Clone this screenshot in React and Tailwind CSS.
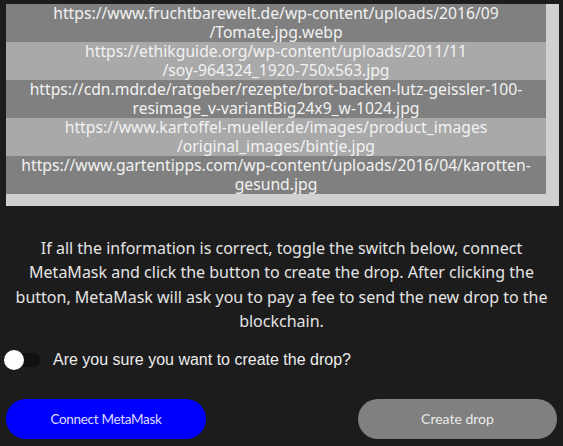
import React, { useState } from 'react';

// each url is split where the reference wraps it
const urls = [
    ['https://www.fruchtbarewelt.de/wp-content/uploads/2016/09', '/Tomate.jpg.webp'],
    ['https://ethikguide.org/wp-content/uploads/2011/11', '/soy-964324_1920-750x563.jpg'],
    ['https://cdn.mdr.de/ratgeber/rezepte/brot-backen-lutz-geissler-100-', 'resimage_v-variantBig24x9_w-1024.jpg'],
    ['https://www.kartoffel-mueller.de/images/product_images', '/original_images/bintje.jpg'],
    ['https://www.gartentipps.com/wp-content/uploads/2016/04/karotten-', 'gesund.jpg'],
];

const App = () => {
    const [confirmed, setConfirmed] = useState(false);

    return (
        <div className="min-h-[446px] bg-[#1c1c1c] pt-[4px] font-['Noto_Sans',sans-serif]">
            {/* image url list */}
            <div className="mx-[6px] w-[553px] bg-[#d0d0d0] pr-[13px] pb-[12px]">
                {urls.map(([first, second], i) => (
                    <div
                        key={first}
                        className={`h-[38px] text-center text-[15.7px] leading-[19px] text-[#f2f2f2] whitespace-nowrap ${i % 2 === 0 ? 'bg-[#808080]' : 'bg-[#a9a9a9]'}`}
                    >
                        <div>{first}</div>
                        <div>{second}</div>
                    </div>
                ))}
            </div>

            <p className="mt-[30px] px-[8px] text-center text-[16px] leading-[24.4px] text-[#e4e4e4]">
                If all the information is correct, toggle the switch below, connect MetaMask and click the button to create the drop. After clicking the button, MetaMask will ask you to pay a fee to send the new drop to the blockchain.
            </p>

            <div className="mt-[14px] flex items-center gap-[13px] pl-[4px]">
                <button
                    type="button"
                    onClick={() => setConfirmed(!confirmed)}
                    className="relative h-[14px] w-[36px] rounded-full bg-[#111111]"
                >
                    <span className={`absolute top-[-3px] h-[20px] w-[20px] rounded-full bg-white ${confirmed ? 'left-[16px]' : 'left-0'}`} />
                </button>
                <span className="font-['Liberation_Sans',sans-serif] text-[16px] text-[#ececec]">
                    Are you sure you want to create the drop?
                </span>
            </div>

            <div className="mt-[27px] flex justify-between px-[6px] font-['Lato',sans-serif]">
                <button className="h-[40px] w-[200px] rounded-full bg-[#0000ff] text-[13.5px] tracking-[-0.3px] text-[#dcdcff]">
                    Connect MetaMask
                </button>
                <button className="h-[40px] w-[199px] rounded-full bg-[#808080] text-[14px] text-[#ebebeb]">
                    Create drop
                </button>
            </div>
        </div>
    );
};

export default App;
